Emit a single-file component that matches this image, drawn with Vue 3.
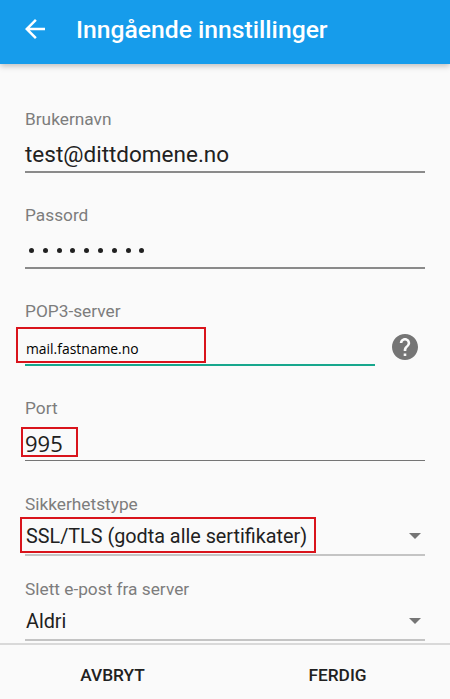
<script setup>
const back = 'M20 11H7.830l5.590-5.590L12 4l-8 8 8 8 1.410-1.410L7.830 13H20v-2z'
const help = 'M12 2C6.480 2 2 6.480 2 12s4.480 10 10 10 10-4.480 10-10S17.520 2 12 2zm1 17h-2v-2h2v2zm2.070-7.750l-.9.920C13.450 12.900 13 13.500 13 15h-2v-.5c0-1.100.450-2.100 1.170-2.830l1.240-1.260c.370-.360.590-.860.590-1.410 0-1.100-.9-2-2-2s-2 .9-2 2H8c0-2.210 1.790-4 4-4s4 1.790 4 4c0 .880-.360 1.680-.930 2.250z'
</script>

<template>
  <div class="screen">
    <!-- Toolbar -->
    <header class="toolbar">
      <svg class="back" viewBox="0 0 24 24" width="30" height="30"><path :d="back" fill="#fff" /></svg>
      <h1>Inngående innstillinger</h1>
    </header>

    <main class="form">
      <div class="field user">
        <label>Brukernavn</label>
        <div class="value">test@dittdomene.no</div>
      </div>

      <div class="field">
        <label>Passord</label>
        <div class="value dots">
          <span v-for="n in 9" :key="n"></span>
        </div>
      </div>

      <div class="field">
        <label>POP3-server</label>
        <div class="server-row">
          <div class="value teal">
            <span class="mail">mail.fastname.no</span>
            <i class="box mail-box"></i>
          </div>
          <svg class="help" viewBox="2 2 20 20" width="26" height="26"><path :d="help" fill="#757575" /></svg>
        </div>
      </div>

      <div class="field">
        <label>Port</label>
        <div class="value port">
          <span>995</span>
          <i class="box port-box"></i>
        </div>
      </div>

      <div class="field security">
        <label>Sikkerhetstype</label>
        <div class="value choice">
          <span>SSL/TLS (godta alle sertifikater)</span>
          <i class="box ssl-box"></i>
          <i class="caret"></i>
        </div>
      </div>

      <div class="field delete">
        <label>Slett e-post fra server</label>
        <div class="value choice">
          <span>Aldri</span>
          <i class="caret"></i>
        </div>
      </div>
    </main>

    <!-- Footer -->
    <footer class="actions">
      <button>AVBRYT</button>
      <button>FERDIG</button>
    </footer>
  </div>
</template>

<style scoped>
.screen {
  width: 450px;
  height: 699px;
  display: flex;
  flex-direction: column;
  overflow: hidden;
  background: #fafafa;
  color: #212121;
  font-family: Roboto, 'Liberation Sans', sans-serif;
}

.toolbar {
  flex: 0 0 64px;
  display: flex;
  align-items: center;
  background: #169ceb;
  box-shadow: 0 2px 6px rgba(0, 0, 0, 0.25);
  position: relative;
}

.back {
  margin: -7px 0 0 20px;
}

.toolbar h1 {
  margin: -6px 0 0 26px;
  color: #fff;
  font-size: 24.700px;
  font-weight: 500;
}

.form {
  flex: 1;
  padding: 0 25px;
}

.field {
  padding-top: 32px;
}

.field.user {
  padding-top: 45px;
}

.field.security {
  padding-top: 33px;
}

.field.delete {
  padding-top: 23px;
}

label {
  display: block;
  height: 20px;
  line-height: 20px;
  font-size: 17.300px;
  color: #7d7d7d;
}

.value {
  height: 44px;
  display: flex;
  align-items: center;
  justify-content: space-between;
  position: relative;
  box-sizing: border-box;
  padding-top: 8px;
  border-bottom: 2px solid #8a8a8a;
  font-size: 22.500px;
}

.dots {
  justify-content: flex-start;
  gap: 8.800px;
  padding-left: 4px;
}

.dots span {
  width: 5px;
  height: 5px;
  border-radius: 50%;
  background: #212121;
}

.server-row {
  display: flex;
  align-items: flex-start;
}

.value.teal {
  flex: 0 0 350px;
  height: 45px;
  padding-top: 12px;
  border-bottom-color: #17a78d;
}

.help {
  margin: 13px 0 0 17px;
}

.mail {
  margin-left: 1px;
  font-family: 'Open Sans', sans-serif;
  font-size: 13.900px;
  color: #000;
}

.port {
  height: 43px;
  border-bottom: 1px solid #757575;
  font-family: 'Open Sans', sans-serif;
  font-size: 22px;
}

/* red marks drawn on top of the screenshot */
.box {
  position: absolute;
  box-sizing: border-box;
  border: 2px solid #d9141c;
  pointer-events: none;
}

.mail-box {
  left: -9px;
  top: 6px;
  width: 190px;
  height: 36px;
}

.port-box {
  left: -4px;
  top: 9px;
  width: 57px;
  height: 30px;
}

.ssl-box {
  left: -5px;
  top: 3px;
  width: 296px;
  height: 36px;
}

.choice {
  height: 42px;
  padding-top: 4px;
  border-bottom-color: #c4c4c4;
  font-size: 19.800px;
}

.choice span {
  margin-left: 1px;
}

.caret {
  width: 0;
  height: 0;
  margin-right: 4px;
  border-left: 6px solid transparent;
  border-right: 6px solid transparent;
  border-top: 6px solid #757575;
}

.actions {
  flex: 0 0 56px;
  display: flex;
  box-sizing: border-box;
  padding-top: 6px;
  border-top: 2px solid #d9d9d9;
  background: #fafafa;
}

.actions button {
  flex: 1;
  padding: 0;
  border: 0;
  background: none;
  font-family: Roboto, 'Liberation Sans', sans-serif;
  font-size: 17.300px;
  font-weight: 500;
  color: #212121;
}
</style>

<style>
html,
body {
  margin: 0;
}
</style>
